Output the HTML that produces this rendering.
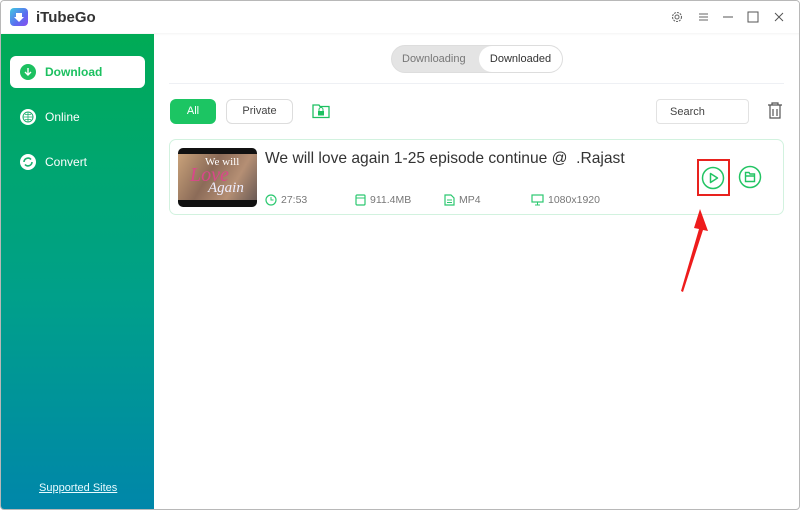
<!DOCTYPE html>
<html><head><meta charset="utf-8"><style>
*{margin:0;padding:0;box-sizing:border-box}
body{width:800px;height:510px;overflow:hidden;background:#fff;font-family:"Liberation Sans",sans-serif;position:relative}
.win{position:absolute;inset:0;border:1px solid #b8b8b8;border-radius:4px;overflow:hidden;background:#fff}
.title{position:absolute;left:0;top:0;width:800px;height:32px;background:#fff;box-shadow:0 1px 2px rgba(0,0,0,.05)}
.logo{position:absolute;left:9px;top:7px;width:18px;height:18px;border-radius:4px;background:linear-gradient(135deg,#3fc9e0,#5b6cf0 60%,#8a4ff0)}
.apptitle{position:absolute;left:35px;top:8px;font-size:15px;font-weight:bold;color:#333}
.side{position:absolute;left:0;top:33px;width:153px;height:477px;background:linear-gradient(#00ab55,#00a08a 55%,#0086aa)}
.nav{position:absolute;left:9px;width:135px;height:32px;border-radius:6px;color:#fff;font-size:12px;display:flex;align-items:center;padding-left:10px}
.nav.act{background:#fff;color:#1cc060;font-weight:bold}
.nav .ic{width:16px;height:16px;border-radius:50%;margin-right:9px;display:flex;align-items:center;justify-content:center}
.sup{position:absolute;left:38px;color:#e8fbff;font-size:11px;text-decoration:underline}
.tabs{position:absolute;left:390px;top:44px;width:172px;height:28px;border-radius:14px;background:#e4e4e4;border:1px solid #ddd}
.tabs span{position:absolute;top:0;line-height:26px;font-size:11px;color:#777}
.tabs .on{left:87px;width:83px;height:26px;background:#fff;border-radius:13px;color:#333;text-align:center}
.hr{position:absolute;left:168px;top:82px;width:615px;height:1px;background:#eef0f4}
.btn{position:absolute;top:98px;height:25px;border-radius:6px;font-size:11px;text-align:center;line-height:25px}
.search{position:absolute;left:655px;top:98px;width:93px;height:25px;border:1px solid #e2e2e2;border-radius:4px;font-size:11px;color:#444;padding-left:13px;line-height:24px}
.card{position:absolute;left:168px;top:138px;width:615px;height:76px;border:1.5px solid #d2f2df;border-radius:7px}
.thumb{position:absolute;left:177px;top:147px;width:79px;height:59px;border-radius:5px;background:#111;overflow:hidden}
.thumb .in{position:absolute;left:0;top:6px;width:79px;height:46px;background:linear-gradient(120deg,#c9a27a,#8b6b58 40%,#b58f74 70%,#6a5a55)}
.vt{position:absolute;left:264px;top:149px;font-size:15.6px;color:#333}
.meta{position:absolute;top:193px;font-size:10.5px;color:#777;display:flex;align-items:center}
.meta svg{margin-right:4px}
</style></head><body><div class="win">
<div class="title"><div class="logo"><svg width="18" height="18" viewBox="0 0 18 18"><path d="M6 5v4H4l5 5 5-5h-2V5z" fill="#fff"/></svg></div><div class="apptitle">iTubeGo</div>
<svg style="position:absolute;left:670px;top:10px" width="12" height="12" viewBox="0 0 12 12"><circle cx="6" cy="6" r="4.5" fill="none" stroke="#666" stroke-width="1.1" stroke-dasharray="2 1"/><circle cx="6" cy="6" r="2" fill="none" stroke="#666"/></svg>
<svg style="position:absolute;left:697px;top:11px" width="11" height="10"><path d="M1 2h9M1 5h9M1 8h9" stroke="#666"/></svg>
<svg style="position:absolute;left:721px;top:10px" width="12" height="12"><path d="M1 6h10" stroke="#555"/></svg>
<svg style="position:absolute;left:746px;top:10px" width="12" height="12"><rect x="1" y="1" width="10" height="10" fill="none" stroke="#555"/></svg>
<svg style="position:absolute;left:772px;top:10px" width="12" height="12"><path d="M2 2l8 8M10 2l-8 8" stroke="#555"/></svg>
</div>
<div class="side">
<div class="nav act" style="top:22px"><div class="ic" style="background:#1cc060"><svg width="10" height="10"><path d="M5 1v7M2 5l3 3 3-3" stroke="#fff" stroke-width="1.4" fill="none"/></svg></div>Download</div>
<div class="nav" style="top:67px"><div class="ic" style="background:#fff"><svg width="12" height="12"><circle cx="6" cy="6" r="5" fill="none" stroke="#1cb070"/><path d="M1 6h10M6 1v10M3 3.5h6M3 8.5h6" stroke="#1cb070" stroke-width=".8"/></svg></div>Online</div>
<div class="nav" style="top:112px"><div class="ic" style="background:#fff"><svg width="12" height="12"><path d="M2 6a4 4 0 0 1 7-2.5M10 6a4 4 0 0 1-7 2.5" stroke="#1cb070" stroke-width="1.6" fill="none"/></svg></div>Convert</div>
<div class="sup" style="top:448px">Supported Sites</div>
</div>
<div class="tabs"><span style="left:10px">Downloading</span><span class="on">Downloaded</span></div>
<div class="hr"></div>
<div class="btn" style="left:169px;width:46px;background:#1cc563;color:#fff">All</div>
<div class="btn" style="left:225px;width:67px;border:1px solid #ddd;color:#444;line-height:23px">Private</div>
<svg style="position:absolute;left:311px;top:101px" width="18" height="17"><path d="M1 3h6l1 1.5h9v11H1z" fill="none" stroke="#1cc060" stroke-width="1.3"/><rect x="6" y="9" width="6" height="4.5" fill="#1cc060"/><path d="M7 9V7.5a2 2 0 0 1 4 0V9" stroke="#1cc060" fill="none"/></svg>
<div class="search">Search</div>
<svg style="position:absolute;left:766px;top:101px" width="16" height="18"><path d="M1 3h14M5 3V1h6v2M3 3v13h10V3M6 7v7M10 7v7" stroke="#555" stroke-width="1.2" fill="none"/></svg>
<div class="card"></div>
<div class="thumb"><div class="in"></div><div style="position:absolute;left:27px;top:8px;font-family:'Liberation Serif',serif;color:#fff;font-size:11px">We will</div><div style="position:absolute;left:12px;top:16px;font-family:'Liberation Serif',serif;color:#d9488a;font-size:20px;font-style:italic">Love</div><div style="position:absolute;left:30px;top:32px;font-family:'Liberation Serif',serif;color:#eef;font-size:15px;font-style:italic">Again</div></div>
<div class="vt">We will love again 1-25 episode continue @&nbsp; .Rajast</div>
<div class="meta" style="left:264px"><svg width="12" height="12"><circle cx="6" cy="6" r="5" fill="none" stroke="#2cc870" stroke-width="1.2"/><path d="M6 3v3h2.5" stroke="#2cc870" fill="none"/></svg>27:53</div>
<div class="meta" style="left:354px"><svg width="11" height="12"><rect x="1" y="1" width="9" height="10" rx="1" fill="none" stroke="#2cc870" stroke-width="1.2"/><path d="M1 4h9" stroke="#2cc870"/></svg>911.4MB</div>
<div class="meta" style="left:443px"><svg width="11" height="12"><path d="M1 1h6l3 3v7H1z" fill="none" stroke="#2cc870" stroke-width="1.2"/><path d="M3 6h5M3 8.5h5" stroke="#2cc870"/></svg>MP4</div>
<div class="meta" style="left:530px"><svg width="13" height="12"><rect x="1" y="1" width="11" height="7" fill="none" stroke="#2cc870" stroke-width="1.2"/><path d="M6.5 8v3M4 11h5" stroke="#2cc870"/></svg>1080x1920</div>
<div style="position:absolute;left:696px;top:158px;width:33px;height:37px;border:2px solid #e8221e"></div>
<svg style="position:absolute;left:700px;top:165px" width="24" height="24"><circle cx="12" cy="12" r="10.5" fill="none" stroke="#22c463" stroke-width="1.5"/><path d="M9.5 7.5v9l7-4.5z" fill="none" stroke="#22c463" stroke-width="1.5" stroke-linejoin="round"/></svg>
<svg style="position:absolute;left:737px;top:164px" width="24" height="24"><circle cx="12" cy="12" r="10.5" fill="none" stroke="#22c463" stroke-width="1.5"/><path d="M7.5 7.5h3.5l1 1.5h4.5v7.5h-9z M7.5 11h9" fill="none" stroke="#22c463" stroke-width="1.4"/></svg>
<svg style="position:absolute;left:670px;top:205px" width="40" height="90"><path d="M29 3 L37 25 L32 24 L12 86 L10 85 L28 23 L23 22 Z" fill="#ee1c1c"/></svg>
</div></body></html>
